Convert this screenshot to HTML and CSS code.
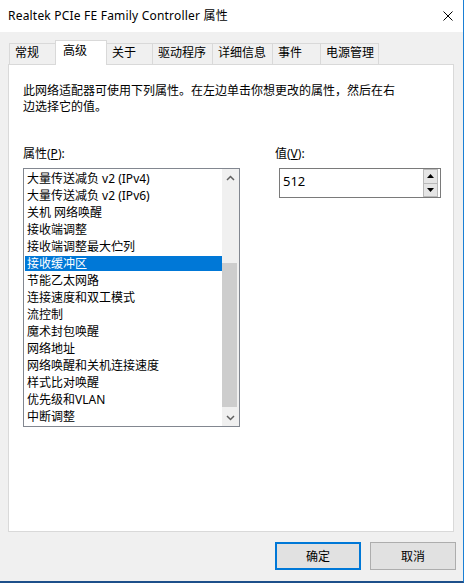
FILE: index.html
```html
<!DOCTYPE html>
<html lang="zh-CN">
<head>
    <meta charset="UTF-8">
    <title>Realtek PCIe FE Family Controller 属性</title>
    <link rel="stylesheet" href="styles.css">
</head>
<body>
    <div class="window">
        <div class="titlebar">
            <span class="title">Realtek PCIe FE Family Controller 属性</span>
            <svg class="close" width="10" height="10" viewBox="0 0 10 10">
                <path d="M0.5 0.5L9.5 9.5M9.5 0.5L0.5 9.5" stroke="#000" stroke-width="1" fill="none"/>
            </svg>
        </div>

        <div class="dialog">
            <div class="sheet">
                <div class="tabs">
                    <div class="tab tab-general">常规</div>
                    <div class="tab tab-advanced active">高级</div>
                    <div class="tab tab-about">关于</div>
                    <div class="tab tab-driver">驱动程序</div>
                    <div class="tab tab-details">详细信息</div>
                    <div class="tab tab-events">事件</div>
                    <div class="tab tab-power">电源管理</div>
                </div>

                <div class="panel">
                    <p class="intro">此网络适配器可使用下列属性。在左边单击你想更改的属性，然后在右<br>边选择它的值。</p>

                    <div class="fields">
                        <div class="field field-props">
                            <label class="field-label">属性(<u>P</u>):</label>
                            <div class="listbox">
                                <ul class="items">
                                    <li>大量传送减负 v2 (IPv4)</li>
                                    <li>大量传送减负 v2 (IPv6)</li>
                                    <li>关机 网络唤醒</li>
                                    <li>接收端调整</li>
                                    <li>接收端调整最大伫列</li>
                                    <li class="selected">接收缓冲区</li>
                                    <li>节能乙太网路</li>
                                    <li>连接速度和双工模式</li>
                                    <li>流控制</li>
                                    <li>魔术封包唤醒</li>
                                    <li>网络地址</li>
                                    <li>网络唤醒和关机连接速度</li>
                                    <li>样式比对唤醒</li>
                                    <li>优先级和VLAN</li>
                                    <li>中断调整</li>
                                </ul>
                                <div class="scrollbar">
                                    <div class="sb-btn">
                                        <svg width="9" height="6" viewBox="0 0 9 6"><path d="M1 5L4.5 1.5L8 5" stroke="#606060" stroke-width="1.5" fill="none"/></svg>
                                    </div>
                                    <div class="sb-track">
                                        <div class="sb-thumb"></div>
                                    </div>
                                    <div class="sb-btn">
                                        <svg width="9" height="6" viewBox="0 0 9 6"><path d="M1 1L4.5 4.5L8 1" stroke="#606060" stroke-width="1.5" fill="none"/></svg>
                                    </div>
                                </div>
                            </div>
                        </div>

                        <div class="field field-value">
                            <label class="field-label">值(<u>V</u>):</label>
                            <div class="spinbox">
                                <span class="spin-value">512</span>
                                <div class="spin-buttons">
                                    <div class="spin-btn">
                                        <svg width="7" height="4" viewBox="0 0 7 4"><polygon points="0,4 7,4 3.5,0" fill="#000"/></svg>
                                    </div>
                                    <div class="spin-btn">
                                        <svg width="7" height="4" viewBox="0 0 7 4"><polygon points="0,0 7,0 3.5,4" fill="#000"/></svg>
                                    </div>
                                </div>
                            </div>
                        </div>
                    </div>
                </div>
            </div>

            <div class="footer">
                <button class="btn btn-default">确定</button>
                <button class="btn">取消</button>
            </div>
        </div>
    </div>
</body>
</html>
```

FILE: styles.css
```css
body {
    margin: 0;
    font-family: "Noto Sans", "Noto Sans CJK SC", sans-serif;
    font-size: 12px;
    color: #000;
    background-color: #fff;
}

.window {
    width: 464px;
    height: 583px;
    box-sizing: border-box;
    border-right: 1px solid #1a7fd4;
    border-bottom: 2px solid #1d4f8a;
    background-color: #f0f0f0;
    display: flex;
    flex-direction: column;
    overflow: hidden;
}

.titlebar {
    height: 32px;
    flex-shrink: 0;
    background-color: #fff;
    display: flex;
    align-items: center;
    justify-content: space-between;
    padding: 0 10px 0 8px;
}

.title {
    line-height: 16px;
    letter-spacing: 0.2px;
}

.dialog {
    flex: 1;
    padding-top: 8px;
    display: flex;
    flex-direction: column;
}

.sheet {
    padding: 0 9px 0 8px;
}

/* tab strip */
.tabs {
    display: flex;
    align-items: flex-end;
    height: 24px;
    padding-left: 1px;
}

.tab {
    box-sizing: border-box;
    height: 21px;
    border: 1px solid #d9d9d9;
    border-bottom: none;
    margin-left: -1px;
    padding: 0 0 2px 5px;
    display: flex;
    align-items: center;
    background-color: #f0f0f0;
    line-height: 16px;
    white-space: nowrap;
}

.tab-general { width: 47px; margin-left: 0; }
.tab-advanced { width: 52px; }
.tab-about { width: 47px; }
.tab-driver { width: 61px; }
.tab-details { width: 61px; }
.tab-events { width: 49px; }
.tab-power { width: 59px; }

.tab.active {
    height: 25px;
    margin-bottom: -1px;
    padding: 0 0 4px 7px;
    background-color: #fff;
    position: relative;
    z-index: 1;
}

.panel {
    height: 468px;
    box-sizing: border-box;
    border: 1px solid #d9d9d9;
    background-color: #fff;
    padding: 18px 14px 0 14px;
}

.intro {
    margin: 0;
    line-height: 16px;
}

.fields {
    display: flex;
    gap: 35px;
    margin-top: 31px;
}

.field-label {
    display: block;
    line-height: 16px;
    margin-bottom: 6px;
}

/* property list */
.listbox {
    width: 217px;
    height: 259px;
    box-sizing: border-box;
    border: 1px solid #828790;
    display: flex;
}

.items {
    flex: 1;
    list-style: none;
    margin: 0;
    padding: 1px 0 0 1px;
    overflow: hidden;
}

.items li {
    height: 17px;
    line-height: 17px;
    padding-left: 2px;
    white-space: nowrap;
}

.items li.selected {
    background: linear-gradient(#0078d7, #0078d7) 0 1px / 100% 15px no-repeat;
    color: #fff;
}

.scrollbar {
    width: 17px;
    background-color: #f0f0f0;
    display: flex;
    flex-direction: column;
}

.sb-btn {
    height: 17px;
    display: flex;
    align-items: center;
    justify-content: center;
}

.sb-track {
    flex: 1;
}

.sb-thumb {
    margin-top: 77px;
    height: 144px;
    width: 15px;
    background-color: #cdcdcd;
}

/* value spin box */
.spinbox {
    width: 162px;
    height: 30px;
    box-sizing: border-box;
    border: 1px solid #7a7a7a;
    margin-left: 4px;
    display: flex;
}

.spin-value {
    flex: 1;
    padding: 4px 0 0 3px;
    line-height: 16px;
    font-size: 13px;
}

.spin-buttons {
    width: 15px;
    margin-right: 2px;
    display: flex;
    flex-direction: column;
}

.spin-btn {
    flex: 1;
    box-sizing: border-box;
    border: 1px solid #b9b9b9;
    background-color: #e5e5e5;
    display: flex;
    align-items: center;
    justify-content: center;
}

.spin-btn + .spin-btn {
    border-top: none;
}

/* dialog buttons */
.footer {
    display: flex;
    justify-content: flex-end;
    gap: 9px;
    margin-top: 10px;
    padding-right: 7px;
}

.btn {
    width: 86px;
    height: 28px;
    box-sizing: border-box;
    border: 1px solid #adadad;
    background-color: #e1e1e1;
    font: inherit;
    color: #000;
    padding: 0;
}

.btn-default {
    border: 2px solid #0078d7;
}
```
